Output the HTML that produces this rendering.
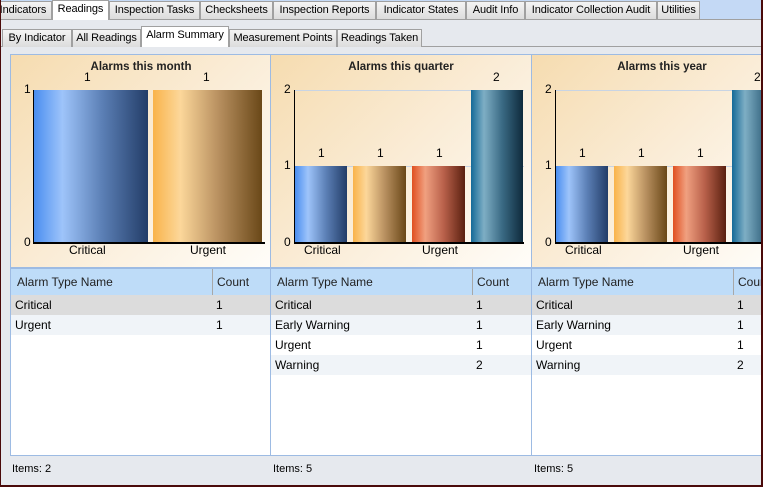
<!DOCTYPE html>
<html><head><meta charset="utf-8"><style>
*{margin:0;padding:0;box-sizing:border-box}
body{width:763px;height:487px;overflow:hidden;background:#e6e9ee;font-family:"Liberation Sans",sans-serif;font-size:12px;color:#000;position:relative}
.a{position:absolute}
.tab,.st{position:absolute;height:18px;background:linear-gradient(#f4f4f4,#dcdcdc);border:1px solid #a0a0a0;border-bottom:none;padding:2px 0 0;white-space:nowrap;font-size:11px;letter-spacing:-0.1px;text-align:center;overflow:hidden}
.tab{top:1px}
.st{top:29px}
.panel{position:absolute;top:54px;height:402px;border:1px solid #9dbbe3;background:#fff;overflow:hidden}
.chart{position:absolute;left:0;top:0;right:0;height:214px;background:linear-gradient(135deg,#f6dcb0 0%,#faecd6 50%,#fffdf9 100%);border-bottom:2px solid #9dbbe3}
.title{position:absolute;top:6px;left:0;width:260px;text-align:center;font-weight:bold;font-size:11.5px;color:#222}
.bar{position:absolute}
.blue{background:linear-gradient(90deg,#4a8ef0,#9ec4fa 25%,#5b7fb5 60%,#233d68)}
.or{background:linear-gradient(90deg,#f9b34a,#fcd79a 25%,#b89060 60%,#6a4818)}
.rd{background:linear-gradient(90deg,#e05020,#f0a080 25%,#b8604a 60%,#5a2010)}
.tl{background:linear-gradient(90deg,#156a98,#7eaec4 25%,#3a6a84 60%,#0e2a3c)}
.grid{position:absolute;left:0;right:0;top:214px}
.hd{height:26px;background:#bedcf8;position:relative;color:#222}
.row{height:20px;position:relative}
.c1{position:absolute;left:4px;top:3px}
.c2{position:absolute;left:205px;top:3px}
.hd .c1{left:6px;top:6px}.hd .c2{left:206px;top:6px}
.sep{position:absolute;left:201px;top:0;bottom:0;width:1px;background:#a8a8a8}
.lbl{position:absolute;font-size:12px}
</style></head><body>
<div class="a" style="left:0;top:0;width:763px;height:20px;background:#c4d9f5"></div>
<div class="a" style="left:0;top:19px;width:763px;height:10px;background:#e6e9ee;border-top:1px solid #a0a0a0"></div>
<div class="tab" style="left:-6px;width:58px">Indicators</div>
<div class="tab" style="left:52px;width:57px;top:0;height:20px;background:#fff;">Readings</div>
<div class="tab" style="left:109px;width:91px">Inspection Tasks</div>
<div class="tab" style="left:200px;width:73px">Checksheets</div>
<div class="tab" style="left:273px;width:103px">Inspection Reports</div>
<div class="tab" style="left:376px;width:90px">Indicator States</div>
<div class="tab" style="left:466px;width:59px">Audit Info</div>
<div class="tab" style="left:525px;width:132px">Indicator Collection Audit</div>
<div class="tab" style="left:657px;width:43px">Utilities</div>
<div class="a" style="left:0;top:46px;width:763px;height:1px;background:#a0a0a0"></div>
<div class="st" style="left:2px;width:70px">By Indicator</div>
<div class="st" style="left:72px;width:69px">All Readings</div>
<div class="st" style="left:141px;width:88px;top:26px;height:21px;background:#fff">Alarm Summary</div>
<div class="st" style="left:229px;width:108px">Measurement Points</div>
<div class="st" style="left:337px;width:85px">Readings Taken</div>

<!-- panel 1 -->
<div class="panel" style="left:10px;width:261px">
 <div class="chart">
  <div class="title">Alarms this month</div>
  <div class="a" style="left:22px;top:35px;width:1px;height:153px;background:#000"></div>
  <div class="a" style="left:22px;top:187px;width:232px;height:2px;background:#000"></div>
  <div class="lbl" style="left:13px;top:27px">1</div>
  <div class="lbl" style="left:13px;top:180px">0</div>
  <div class="bar blue" style="left:23px;top:35px;width:114px;height:152px"></div>
  <div class="bar or" style="left:142px;top:35px;width:109px;height:152px"></div>
  <div class="lbl" style="left:73px;top:15px">1</div>
  <div class="lbl" style="left:192px;top:15px">1</div>
  <div class="lbl" style="left:58px;top:188px">Critical</div>
  <div class="lbl" style="left:179px;top:188px">Urgent</div>
 </div>
 <div class="grid">
  <div class="hd"><span class="c1">Alarm Type Name</span><div class="sep"></div><span class="c2">Count</span></div>
  <div class="row" style="background:#dcdcdc"><span class="c1">Critical</span><span class="c2">1</span></div>
  <div class="row" style="background:#f0f4f8"><span class="c1">Urgent</span><span class="c2">1</span></div>
 </div>
</div>
<!-- panel 2 -->
<div class="panel" style="left:270px;width:262px">
 <div class="chart">
  <div class="title">Alarms this quarter</div>
  <div class="a" style="left:23px;top:35px;width:230px;height:1px;background:#c8d4e4"></div>
  <div class="a" style="left:23px;top:111px;width:230px;height:1px;background:#c8d4e4"></div>
  <div class="a" style="left:23px;top:35px;width:1px;height:153px;background:#000"></div>
  <div class="a" style="left:23px;top:187px;width:230px;height:2px;background:#000"></div>
  <div class="lbl" style="left:13px;top:27px">2</div>
  <div class="lbl" style="left:13px;top:103px">1</div>
  <div class="lbl" style="left:13px;top:180px">0</div>
  <div class="bar blue" style="left:24px;top:111px;width:52px;height:76px"></div>
  <div class="bar or" style="left:82px;top:111px;width:53px;height:76px"></div>
  <div class="bar rd" style="left:141px;top:111px;width:53px;height:76px"></div>
  <div class="bar tl" style="left:200px;top:35px;width:52px;height:152px"></div>
  <div class="lbl" style="left:47px;top:91px">1</div>
  <div class="lbl" style="left:106px;top:91px">1</div>
  <div class="lbl" style="left:165px;top:91px">1</div>
  <div class="lbl" style="left:222px;top:15px">2</div>
  <div class="lbl" style="left:33px;top:188px">Critical</div>
  <div class="lbl" style="left:151px;top:188px">Urgent</div>
 </div>
 <div class="grid">
  <div class="hd"><span class="c1">Alarm Type Name</span><div class="sep"></div><span class="c2">Count</span></div>
  <div class="row" style="background:#dcdcdc"><span class="c1">Critical</span><span class="c2">1</span></div>
  <div class="row" style="background:#f0f4f8"><span class="c1">Early Warning</span><span class="c2">1</span></div>
  <div class="row"><span class="c1">Urgent</span><span class="c2">1</span></div>
  <div class="row" style="background:#f0f4f8"><span class="c1">Warning</span><span class="c2">2</span></div>
 </div>
</div>
<!-- panel 3 -->
<div class="panel" style="left:531px;width:240px">
 <div class="chart">
  <div class="title">Alarms this year</div>
  <div class="a" style="left:23px;top:35px;width:230px;height:1px;background:#c8d4e4"></div>
  <div class="a" style="left:23px;top:111px;width:230px;height:1px;background:#c8d4e4"></div>
  <div class="a" style="left:23px;top:35px;width:1px;height:153px;background:#000"></div>
  <div class="a" style="left:23px;top:187px;width:230px;height:2px;background:#000"></div>
  <div class="lbl" style="left:13px;top:27px">2</div>
  <div class="lbl" style="left:13px;top:103px">1</div>
  <div class="lbl" style="left:13px;top:180px">0</div>
  <div class="bar blue" style="left:24px;top:111px;width:52px;height:76px"></div>
  <div class="bar or" style="left:82px;top:111px;width:53px;height:76px"></div>
  <div class="bar rd" style="left:141px;top:111px;width:53px;height:76px"></div>
  <div class="bar tl" style="left:200px;top:35px;width:52px;height:152px"></div>
  <div class="lbl" style="left:47px;top:91px">1</div>
  <div class="lbl" style="left:106px;top:91px">1</div>
  <div class="lbl" style="left:165px;top:91px">1</div>
  <div class="lbl" style="left:222px;top:15px">2</div>
  <div class="lbl" style="left:33px;top:188px">Critical</div>
  <div class="lbl" style="left:151px;top:188px">Urgent</div>
 </div>
 <div class="grid">
  <div class="hd"><span class="c1">Alarm Type Name</span><div class="sep"></div><span class="c2">Count</span></div>
  <div class="row" style="background:#dcdcdc"><span class="c1">Critical</span><span class="c2">1</span></div>
  <div class="row" style="background:#f0f4f8"><span class="c1">Early Warning</span><span class="c2">1</span></div>
  <div class="row"><span class="c1">Urgent</span><span class="c2">1</span></div>
  <div class="row" style="background:#f0f4f8"><span class="c1">Warning</span><span class="c2">2</span></div>
 </div>
</div>

<div class="lbl" style="left:12px;top:463px;font-size:11px">Items: 2</div>
<div class="lbl" style="left:273px;top:463px;font-size:11px">Items: 5</div>
<div class="lbl" style="left:534px;top:463px;font-size:11px">Items: 5</div>

<div class="a" style="left:0;top:0;width:1px;height:487px;background:#4a0a0a"></div>
<div class="a" style="right:0;top:0;width:2px;height:487px;background:#4a0a0a"></div>
<div class="a" style="left:0;bottom:0;width:763px;height:2px;background:#4a0a0a"></div>
</body></html>
